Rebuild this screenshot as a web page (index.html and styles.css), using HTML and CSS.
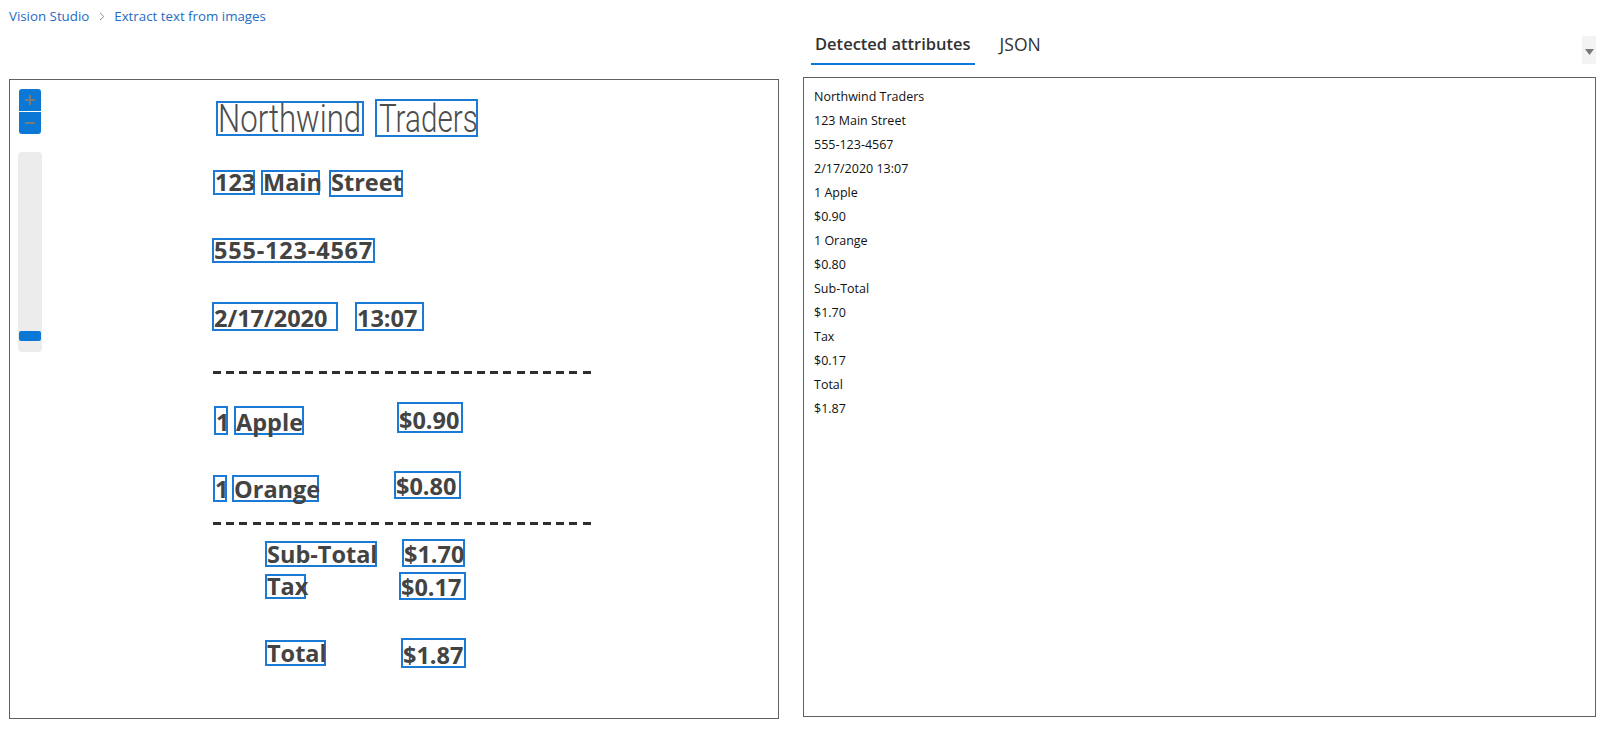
FILE: index.html
```html
<!DOCTYPE html>
<html lang="en">
<head>
<meta charset="utf-8">
<title>Extract text from images - Vision Studio</title>
<link rel="stylesheet" href="styles.css">
</head>
<body>
<nav class="breadcrumb">
  <a class="crumb" href="#">Vision Studio</a>
  <svg class="chev" width="6" height="9" viewBox="0 0 6 9"><path d="M1 0.8 L4.8 4.5 L1 8.2" fill="none" stroke="#8a8886" stroke-width="1"/></svg>
  <a class="crumb" href="#">Extract text from images</a>
</nav>
<main class="main">
  <section class="left">
    <div class="viewer">
      <div class="zoom">
        <button class="zbtn zplus" aria-label="Zoom in"><svg width="12" height="12" viewBox="0 0 12 12"><path d="M6 1v10M1 6h10" stroke="#7a7a7a" stroke-width="2"/></svg></button>
        <button class="zbtn zminus" aria-label="Zoom out"><svg width="12" height="12" viewBox="0 0 12 12"><path d="M1 6h10" stroke="#7a7a7a" stroke-width="2"/></svg></button>
      </div>
      <div class="track"><div class="thumb"></div></div>

      <div class="receipt">
        <span class="title t1" style="left:206px;top:21px;width:148px;height:35px"><span class="tx">Northwind</span></span>
        <span class="title t2" style="left:365px;top:19px;width:103px;height:38px"><span class="tx">Traders</span></span>

        <span class="w" style="left:203px;top:90px;width:42px;height:25px">123</span>
        <span class="w" style="left:251px;top:90px;width:59px;height:25px">Main</span>
        <span class="w lift" style="left:319px;top:90px;width:74px;height:27px">Street</span>

        <span class="w wide" style="left:202px;top:158px;width:163px;height:25px">555-123-4567</span>

        <span class="w" style="left:202px;top:222px;width:126px;height:29px">2/17/2020</span>
        <span class="w" style="left:345px;top:222px;width:69px;height:29px">13:07</span>

        <div class="dash" style="top:291px"></div>

        <span class="w" style="left:204px;top:326px;width:14px;height:29px">1</span>
        <span class="w" style="left:224px;top:326px;width:70px;height:29px">Apple</span>
        <span class="w" style="left:387px;top:322px;width:66px;height:31px">$0.90</span>

        <span class="w" style="left:203px;top:395px;width:14px;height:27px">1</span>
        <span class="w" style="left:222px;top:395px;width:87px;height:27px">Orange</span>
        <span class="w" style="left:384px;top:391px;width:67px;height:28px">$0.80</span>

        <div class="dash" style="top:442px"></div>

        <span class="w" style="left:255px;top:461px;width:112px;height:26px">Sub-Total</span>
        <span class="w" style="left:392px;top:459px;width:63px;height:28px">$1.70</span>
        <span class="w" style="left:255px;top:494px;width:41px;height:25px">Tax</span>
        <span class="w" style="left:389px;top:492px;width:67px;height:28px">$0.17</span>
        <span class="w" style="left:255px;top:560px;width:61px;height:26px">Total</span>
        <span class="w" style="left:391px;top:558px;width:65px;height:30px">$1.87</span>
      </div>
    </div>
  </section>

  <section class="right">
    <div class="tabs">
      <div class="tab active">Detected attributes</div>
      <div class="tab json">JSON</div>
      <div class="more"><svg width="9" height="6" viewBox="0 0 9 6"><path d="M0 0h9L4.5 6z" fill="#7a7a7a"/></svg></div>
    </div>
    <div class="results">
      <div class="line">Northwind Traders</div>
      <div class="line">123 Main Street</div>
      <div class="line">555-123-4567</div>
      <div class="line">2/17/2020 13:07</div>
      <div class="line">1 Apple</div>
      <div class="line">$0.90</div>
      <div class="line">1 Orange</div>
      <div class="line">$0.80</div>
      <div class="line">Sub-Total</div>
      <div class="line">$1.70</div>
      <div class="line">Tax</div>
      <div class="line">$0.17</div>
      <div class="line">Total</div>
      <div class="line">$1.87</div>
    </div>
  </section>
</main>
</body>
</html>
```

FILE: styles.css
```css
* { box-sizing: border-box; }

html, body {
  margin: 0;
  padding: 0;
  background: #ffffff;
}

body {
  font-family: "Open Sans", "Noto Sans", "Liberation Sans", sans-serif;
  color: #201f1e;
  width: 1611px;
  height: 731px;
  overflow: hidden;
}

.breadcrumb {
  height: 28px;
  padding: 7px 0 0 9px;
  display: flex;
  align-items: flex-start;
  font-size: 13.3px;
  line-height: 18px;
}

.crumb {
  color: #1f6cc4;
  text-decoration: none;
}

.chev {
  margin: 5px 9px 0 10px;
}

.main {
  display: flex;
  padding-left: 9px;
}

.left {
  width: 770px;
  padding-top: 51px;
}

.viewer {
  position: relative;
  width: 770px;
  height: 640px;
  border: 1px solid #616161;
  overflow: hidden;
}

.zoom {
  position: absolute;
  left: 9px;
  top: 9px;
  width: 22px;
  display: flex;
  flex-direction: column;
  gap: 1px;
  z-index: 2;
}

.zbtn {
  width: 22px;
  height: 22px;
  padding: 0;
  border: 0;
  background: #0a78d4;
  display: flex;
  align-items: center;
  justify-content: center;
}

.zplus { border-radius: 3px 3px 0 0; }
.zminus { border-radius: 0 0 3px 3px; }

.track {
  position: absolute;
  left: 8px;
  top: 72px;
  width: 24px;
  height: 200px;
  background: #ececec;
  border-radius: 4px;
  z-index: 2;
}

.thumb {
  position: absolute;
  left: 1px;
  top: 179px;
  width: 22px;
  height: 10px;
  background: #0a78d4;
  border-radius: 2px;
}

.receipt {
  position: absolute;
  inset: 0;
  font-family: "Open Sans", "Noto Sans", sans-serif;
  font-weight: 700;
  font-size: 23.5px;
  color: #434343;
}

.w {
  position: absolute;
  display: flex;
  align-items: flex-end;
  padding-bottom: 0.5px;
  border: 2px solid #1a7ad6;
  white-space: nowrap;
  line-height: 21px;
  overflow: visible;
}

.w.lift {
  padding-bottom: 2.5px;
}

.wide {
  letter-spacing: 0.8px;
}

.title {
  position: absolute;
  display: block;
  border: 2px solid #1a7ad6;
  white-space: nowrap;
  font-family: "Roboto", "Liberation Sans", sans-serif;
  font-weight: 300;
  font-size: 39px;
  line-height: 33px;
  color: #4d4d4d;
}

.title .tx {
  display: inline-block;
  transform-origin: left center;
}

.t1 .tx {
  transform: scaleX(0.8);
}

.t2 {
  line-height: 36px;
  padding-left: 2px;
}

.t2 .tx {
  transform: scaleX(0.76);
}

.dash {
  position: absolute;
  left: 203px;
  width: 382px;
  height: 3px;
  background: repeating-linear-gradient(90deg, #2e2e2e 0 8px, transparent 8px 13.2px);
}

.right {
  width: 793px;
  margin-left: 24px;
  margin-top: -28px;
  padding-top: 28px;
}

.tabs {
  height: 49px;
  display: flex;
  align-items: flex-start;
  padding-left: 8px;
}

.tab {
  padding: 3px 4px 0 4px;
  height: 37px;
  font-size: 16.5px;
  font-weight: 600;
  line-height: 26px;
  color: #323130;
  margin-right: 21px;
}

.tab.active {
  border-bottom: 2px solid #0a78d4;
}

.tab.json {
  font-weight: 400;
  font-size: 17.5px;
}

.more {
  margin-left: auto;
  margin-top: 8px;
  width: 14px;
  height: 28px;
  background: #f3f3f3;
  display: flex;
  align-items: center;
  justify-content: center;
  padding-top: 4px;
}

.results {
  height: 640px;
  border: 1px solid #616161;
  padding: 7px 10px 6px 10px;
}

.line {
  font-size: 12.5px;
  line-height: 24px;
  color: #111111;
}
```
